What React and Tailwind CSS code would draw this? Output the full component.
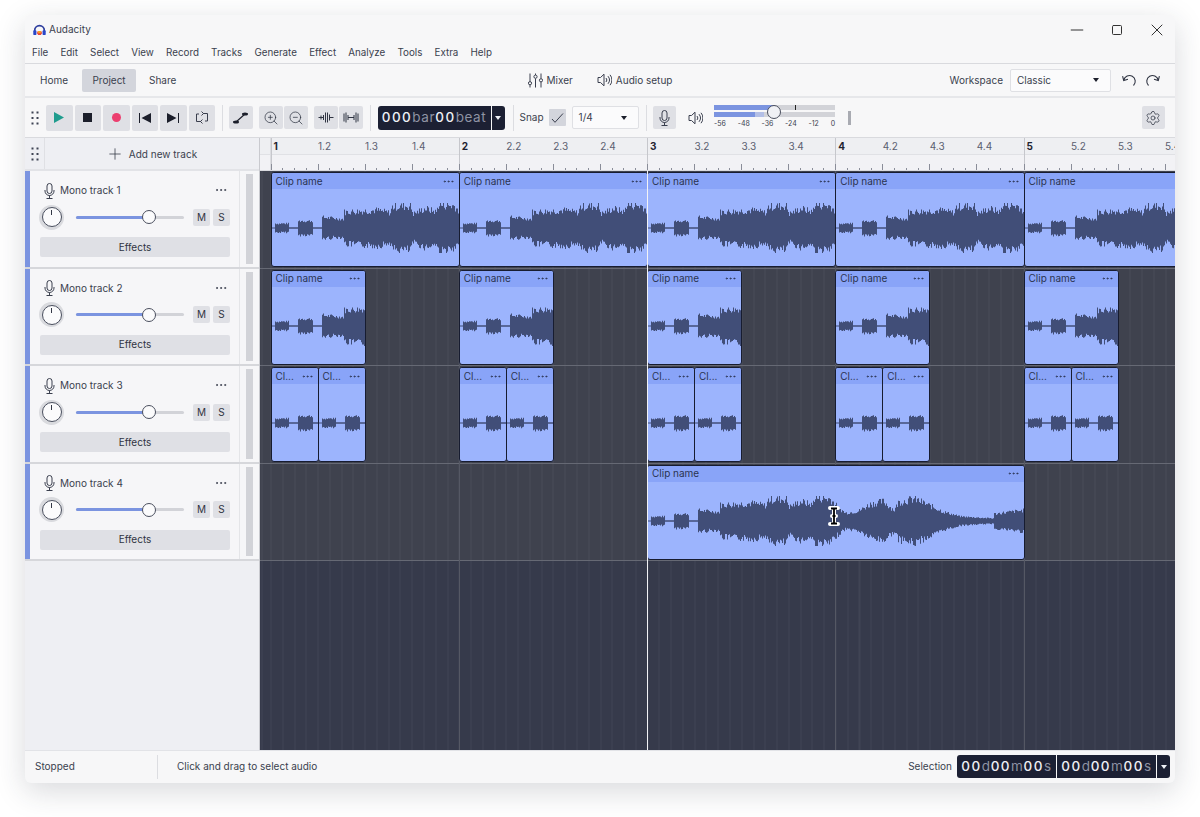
import { Ellipsis, Minus, Plus, Settings, Square, X, ZoomIn, ZoomOut } from 'lucide-react';

const FONT = "font-['Inter','Noto_Sans',sans-serif]";
const menus = ['File', 'Edit', 'Select', 'View', 'Record', 'Tracks', 'Generate', 'Effect', 'Analyze', 'Tools', 'Extra', 'Help'];
const BAR = 188.25;

// amplitude envelope of the sample, [x, half height] pairs
const envelope = [
  [0, 0.5], [2, 0.5], [3, 5], [16, 5], [17, 0.8], [25, 0.8], [26, 8], [40, 8], [41, 0.8], [49, 0.8], [50, 12],
  [71, 10], [72, 18], [105, 20], [118, 17], [120, 24], [138, 25], [141, 16], [153, 22], [164, 18], [166, 26], [182, 25],
  [190, 15], [197, 9], [210, 11], [222, 19], [235, 22], [246, 12], [250, 21], [266, 25], [284, 16], [296, 10],
  [312, 5], [335, 3.5], [345, 3], [346, 8], [360, 10], [376, 12],
];

const ampAt = (x) => {
  for (let i = 1; i < envelope.length; i++) {
    const [x0, a0] = envelope[i - 1];
    const [x1, a1] = envelope[i];
    if (x <= x1) return a0 + ((a1 - a0) * (x - x0)) / (x1 - x0);
  }
  return 0;
};

const buildWave = () => {
  let d = '';
  let seed = 7;
  const next = () => {
    seed = (seed * 9301 + 49297) % 233280;
    return seed / 233280;
  };
  for (let x = 0; x < 376; x += 1) {
    const amp = ampAt(x);
    const up = amp < 1 ? 1 : 0.7 + next() * 0.36;
    const down = amp < 1 ? 1 : 0.7 + next() * 0.36;
    d += `M${x + 0.5} ${(25 + amp * down).toFixed(1)}V${(25 - amp * up).toFixed(1)}`;
  }
  return d;
};
const wavePath = buildWave();

const Grip = () => (
  <svg width="8" height="14" viewBox="0 0 8 14" fill="#3f4454">
    {[1.5, 7, 12.5].map((y) => (
      <g key={y}>
        <rect x="0.5" y={y - 1} width="2" height="2" />
        <rect x="5.5" y={y - 1} width="2" height="2" />
      </g>
    ))}
  </svg>
);

const MicIcon = ({ className = '' }) => (
  <svg className={className} width="11" height="16" viewBox="0 0 11 16" fill="none" stroke="#3a3f4e" strokeWidth="1">
    <rect x="3" y="0.5" width="5" height="10" rx="2.5" />
    <path d="M1 7v1a4.5 4.5 0 0 0 9 0V7M5.5 12.5v2.5M2.5 15.5h6" />
  </svg>
);

const SpeakerIcon = () => (
  <svg width="15" height="14" viewBox="0 0 15 14" fill="none" stroke="#3a3f4e" strokeWidth="1">
    <path d="M1 4.5h2.5L7 1.2v11.6L3.5 9.500H1z" />
    <path d="M9 5a3 3 0 0 1 0 4M11 3.200a6 6 0 0 1 0 7.600M13 1.800a8 8 0 0 1 0 10.400" />
  </svg>
);

const MixerIcon = () => (
  <svg width="15" height="15" viewBox="0 0 15 15" fill="none" stroke="#3a3f4e" strokeWidth="1">
    <path d="M2 0.500v8M2 12v2.500M7.500 0.500v1.500M7.500 5.500v9M13 0.500v5M13 9v5.500" />
    <circle cx="2" cy="10.200" r="1.600" />
    <circle cx="7.500" cy="3.700" r="1.600" />
    <circle cx="13" cy="7.300" r="1.600" />
  </svg>
);

const Logo = () => (
  <svg width="13" height="12" viewBox="0 0 14 12" fill="none">
    <path d="M1.800 8V6.500a5.200 5.200 0 0 1 10.400 0V8" stroke="#2f3f9e" strokeWidth="1.900" />
    <rect x="0.300" y="6.200" width="3.400" height="5.300" rx="1.300" fill="#2946c8" />
    <rect x="10.300" y="6.200" width="3.400" height="5.300" rx="1.300" fill="#2946c8" />
    <path d="M4.500 7.500h5v2l-1 2h-3l-1-2z" fill="#e8413a" />
    <path d="M5.500 7h3v2.500h-3z" fill="#f7a01d" />
  </svg>
);

const UndoIcon = ({ className = '' }) => (
  <svg className={className} width="15" height="15" viewBox="0 0 15 15" fill="none" stroke="#2f3442" strokeWidth="1.100">
    <path d="M1.800 7A5.800 5.800 0 1 1 11.500 12.500M0.600 3.200L1.700 7.600L6 6.300" />
  </svg>
);

const ToolButton = ({ children, wide }) => (
  <button className={`flex items-center justify-center bg-[#dfe0e5] rounded-[2px] ${wide ? 'w-[26.5px] h-[26px]' : 'w-[23.5px] h-[23.5px]'}`}>
    {children}
  </button>
);

const Divider = () => <div className="w-px h-[26px] bg-[#dcdde1]" />;

const Caret = ({ color = '#1c1f2b' }) => (
  <svg width="6" height="4" viewBox="0 0 6 4" fill={color}><path d="M0 0h6L3 4z" /></svg>
);

const Digits = ({ parts }) => (
  <span className="flex items-baseline tracking-[1.2px]">
    {parts.map(([text, dim], i) => (
      <span key={i} className={dim ? 'text-[#8f93a3] tracking-[0.6px]' : 'text-[#eef0f5] font-medium tracking-[1.5px]'}>{text}</span>
    ))}
  </span>
);

const DropSelect = ({ label, className }) => (
  <div className={`flex items-center justify-between bg-[#fbfbfc] border border-[#dfe0e4] rounded-[2px] h-[23px] pl-[6px] pr-[11px] text-[10px] text-[#3a3f4e] ${className}`}>
    {label}
    <Caret />
  </div>
);

const Track = ({ name }) => (
  <div className="flex h-[97.5px] border-b-2 border-[#d6d7db] bg-[#f6f6f8]">
    <div className="w-[5px] bg-[#7b94e0]" />
    <div className="w-[210px] px-[10px] pt-[11px] border-r border-[#e4e5e8]">
      <div className="flex items-center h-[17px]">
        <MicIcon className="ml-[4px]" />
        <span className="ml-[5px] text-[10px] text-[#3a3f4e]">{name}</span>
        <Ellipsis size={14} strokeWidth={1.5} color="#3a3f4e" className="ml-auto mr-[1px] mt-[-1px]" />
      </div>
      <div className="flex items-center mt-[9px] h-[18px]">
        <div className="w-[25px] h-[25px] -ml-[1px] rounded-full bg-[#d9dade] flex items-center justify-center shrink-0">
          <div className="w-[20px] h-[20px] rounded-full bg-[#fbfbfc] border-[1.5px] border-[#4a4f5e] flex justify-center pt-[2px]">
            <div className="w-[1.5px] h-[5px] bg-[#333846]" />
          </div>
        </div>
        <div className="relative ml-[12px] w-[108px] h-[3px] bg-[#d2d3d8] rounded-full shrink-0">
          <div className="h-full w-[74px] bg-[#7b94e0] rounded-full" />
          <div className="absolute left-[66px] -top-[5.500px] w-[14px] h-[14px] rounded-full bg-[#fbfbfc] border border-[#4a4f5e]" />
        </div>
        <div className="ml-[9px] w-[17px] h-[17px] shrink-0 bg-[#dfe0e5] rounded-[2px] flex items-center justify-center text-[10px] text-[#2f3442]">M</div>
        <div className="ml-[3px] w-[17px] h-[17px] shrink-0 bg-[#dfe0e5] rounded-[2px] flex items-center justify-center text-[10px] text-[#2f3442]">S</div>
      </div>
      <button className="mt-[11px] w-[190px] h-[20px] bg-[#dfe0e5] rounded-[2px] text-[10px] text-[#2f3442]">Effects</button>
    </div>
    <div className="flex-1 py-[3px] flex justify-center">
      <div className="w-[7px] h-full bg-[#d2d3d8]" />
    </div>
  </div>
);

const Clip = ({ left, width, name }) => (
  <div
    className="absolute z-10 top-px h-[95px] overflow-hidden rounded-[3px] border border-[#171c30] bg-[#9cb4fd]"
    style={{ left, width }}
  >
    <div className="flex items-center justify-between h-[16px] bg-[#89a4f8] px-[4px] text-[10px] text-[#2a3350]">
      <span>{name}</span>
      <Ellipsis size={13} strokeWidth={1.5} color="#2a3350" />
    </div>
    <svg className="absolute left-0 top-[30px]" width="376" height="50" viewBox="0 0 376 50">
      <path d={wavePath} stroke="#414e78" strokeWidth="1.050" fill="none" />
    </svg>
  </div>
);

const Row = ({ children }) => (
  <div className="relative h-[97.5px] bg-[#3f424e] bg-[repeating-linear-gradient(90deg,rgba(255,255,255,0.05)_0_1px,transparent_1px_11.77px)] bg-[position:10.5px_0] border-b border-[#666974]">
    {children}
  </div>
);

const bars = [0, 1, 2, 3, 4];
const tickPositions = Array.from({ length: 78 }, (_, i) => i);

const App = () => (
  <div className={`min-h-[817px] bg-white pt-[15px] px-[25px] ${FONT}`}>
    <div className="w-[1150px] h-[768px] flex flex-col overflow-hidden rounded-[6px] bg-[#f7f7f8] shadow-[0_8px_30px_rgba(40,44,60,0.18)]">
      {/* title bar */}
      <div className="flex items-center h-[29px] pl-[8px] pr-[8px] shrink-0">
        <Logo />
        <span className="ml-[3px] text-[10px] text-[#3a3f4e]">Audacity</span>
        <div className="ml-auto flex items-center gap-[20px]">
          <Minus size={20} strokeWidth={1.2} color="#333" />
          <Square size={12} strokeWidth={2} color="#333" className="mx-[4px]" />
          <X size={20} strokeWidth={1.2} color="#333" />
        </div>
      </div>
      {/* menu */}
      <div className="flex items-center gap-[12.2px] h-[19px] pl-[7px] border-b border-[#d9dade] box-content shrink-0 text-[9.8px] text-[#3a3f4e]">
        {menus.map((m) => <span key={m}>{m}</span>)}
      </div>
      {/* tabs */}
      <div className="grid grid-cols-[1fr_auto_1fr] items-center h-[32px] border-b-2 border-[#e6e7ea] box-content shrink-0 text-[10px] text-[#3a3f4e]">
        <div className="flex items-center pl-[5px]">
          <span className="px-[10px]">Home</span>
          <span className="ml-[4px] w-[54px] h-[23px] flex items-center justify-center bg-[#d3d5dc] rounded-[2px]">Project</span>
          <span className="ml-[13px]">Share</span>
        </div>
        <div className="flex items-center">
          <MixerIcon />
          <span className="ml-[4px]">Mixer</span>
          <span className="ml-[24px]"><SpeakerIcon /></span>
          <span className="ml-[4px]">Audio setup</span>
        </div>
        <div className="flex items-center justify-end pr-[15px]">
          <span>Workspace</span>
          <DropSelect label="Classic" className="ml-[7px] w-[101px]" />
          <UndoIcon className="ml-[11px]" />
          <UndoIcon className="ml-[8px] -scale-x-100" />
        </div>
      </div>
      {/* transport toolbar */}
      <div className="flex items-center h-[39px] border-b border-[#d9dade] box-content shrink-0 pl-[6px]">
        <Grip />
        <div className="flex gap-[2px] ml-[7px]">
          <ToolButton wide>
            <svg width="10" height="11" viewBox="0 0 10 11" fill="#1f9c8e"><path d="M0 0l10 5.500L0 11z" /></svg>
          </ToolButton>
          <ToolButton wide><div className="w-[9px] h-[9px] bg-[#1c1f2b]" /></ToolButton>
          <ToolButton wide><div className="w-[9px] h-[9px] rounded-full bg-[#ec3f6f]" /></ToolButton>
          <ToolButton wide>
            <svg width="12" height="10" viewBox="0 0 12 10" fill="#1c1f2b"><path d="M0 0h1v10H0zM12 0v10L2.500 5z" /></svg>
          </ToolButton>
          <ToolButton wide>
            <svg width="12" height="10" viewBox="0 0 12 10" fill="#1c1f2b"><path d="M11 0h1v10h-1zM0 0v10l9.500-5z" /></svg>
          </ToolButton>
          <ToolButton wide>
            <svg width="12" height="13" viewBox="0 0 12 13" fill="none" stroke="#3a3f4e" strokeWidth="1">
              <path d="M7 2.500h4.500v7.500H9M5 10.500H0.500V3H3M5.500 0.500L7.500 2.500L5.500 4.500M6.500 8.500L4.500 10.500L6.500 12.500" />
            </svg>
          </ToolButton>
        </div>
        <div className="ml-[7px]"><Divider /></div>
        <div className="ml-[6px]">
          <ToolButton>
            <svg width="15" height="12" viewBox="0 0 15 12" fill="#1c1f2b">
              <path d="M3 10L12 2" stroke="#1c1f2b" strokeWidth="1.100" />
              <ellipse cx="3" cy="10" rx="3" ry="1.500" />
              <ellipse cx="12" cy="2" rx="3" ry="1.500" />
            </svg>
          </ToolButton>
        </div>
        <div className="flex gap-[1.500px] ml-[6.500px]">
          <ToolButton><ZoomIn size={16} strokeWidth={1.1} color="#2f3442" /></ToolButton>
          <ToolButton><ZoomOut size={16} strokeWidth={1.1} color="#2f3442" /></ToolButton>
        </div>
        <div className="flex gap-[1.500px] ml-[6.500px]">
          <ToolButton>
            <svg width="16" height="11" viewBox="0 0 16 11" fill="none" stroke="#2f3442" strokeWidth="1">
              <path d="M0.500 5.500H5M11 5.500h4.500M5.500 3v5M7.500 0.500v10M9.500 0.500v10M11.500 2.500v6" />
              <path d="M3 3.500v4" />
            </svg>
          </ToolButton>
          <ToolButton>
            <svg width="16" height="11" viewBox="0 0 16 11" fill="none" stroke="#2f3442" strokeWidth="1">
              <path d="M1 1.500v8M3 0.500v10M5 3v5M5 5.500h6M11 3v5M13 0.500v10M15 1.500v8" />
            </svg>
          </ToolButton>
        </div>
        <div className="ml-[7px]"><Divider /></div>
        <div className="flex ml-[7px] h-[24px] rounded-[3px] overflow-hidden text-[13.500px]">
          <div className="w-[113px] bg-[#1c2033] flex items-center justify-center"><Digits parts={[['000'], ['bar', 1], ['00'], ['beat', 1]]} /></div>
          <div className="ml-px w-[13px] bg-[#1c2033] flex items-center justify-center"><Caret color="#eef0f5" /></div>
        </div>
        <div className="ml-[8px]"><Divider /></div>
        <span className="ml-[6px] text-[10px] text-[#3a3f4e]">Snap</span>
        <div className="ml-[5px] w-[17px] h-[17px] bg-[#d3d5dc] rounded-[1px] flex items-center justify-center">
          <svg width="13" height="10" viewBox="0 0 13 10" fill="none" stroke="#3a3f4e" strokeWidth="1"><path d="M1 6l3 3.300L12 0.500" /></svg>
        </div>
        <DropSelect label="1/4" className="ml-[6px] w-[67px]" />
        <div className="ml-[7px]"><Divider /></div>
        <div className="ml-[6px]"><ToolButton><MicIcon /></ToolButton></div>
        <div className="ml-[12px]"><SpeakerIcon /></div>
        {/* level meter */}
        <div className="relative ml-[11px] w-[121px] h-[26px] text-[7px] text-[#3a3f4e]">
          <div className="relative h-[5px] bg-[#d2d3d8]">
            <div className="h-full w-[60px] bg-[#7b94e0]" />
            <div className="absolute left-[81px] top-0 w-px h-full bg-[#222]" />
          </div>
          <div className="flex h-[5px] mt-[2px] bg-[#d2d3d8]">
            <div className="h-full w-[41px] bg-[#7b94e0]" />
            <div className="h-full w-[9px] bg-[#b3bfe6]" />
          </div>
          <div className="flex justify-between mt-[2px] leading-[9px]">
            {['-56', '-48', '-36', '-24', '-12', '0'].map((l) => <span key={l}>{l}</span>)}
          </div>
          <div className="absolute left-[53px] top-0 w-[14px] h-[14px] rounded-full bg-[#f0f1f5] border border-[#4a4f5e]" />
        </div>
        <div className="ml-[13px] w-[3px] h-[14px] bg-[#a9abb2]" />
        <div className="ml-auto mr-[10px]"><ToolButton><Settings size={16} strokeWidth={1.1} color="#2f3442" /></ToolButton></div>
      </div>
      {/* main area */}
      <div className="flex-1 min-h-0 flex">
        {/* track panel */}
        <div className="w-[235px] shrink-0 flex flex-col bg-[#eeeff3] border-r border-[#c9cacf]">
          <div className="flex h-[33px] shrink-0 border-b-2 border-[#e2e3e7]">
            <div className="w-[20px] flex items-center justify-center border-r border-[#dfe0e4]"><Grip /></div>
            <div className="flex-1 flex items-center justify-center pt-[1px] pr-[1px] text-[10px] text-[#3a3f4e]">
              <Plus size={18} strokeWidth={1} color="#2f3442" />
              <span className="ml-[5px]">Add new track</span>
            </div>
          </div>
          {['Mono track 1', 'Mono track 2', 'Mono track 3', 'Mono track 4'].map((n) => <Track key={n} name={n} />)}
        </div>
        {/* timeline */}
        <div className="flex-1 min-w-0 flex flex-col overflow-hidden relative">
          {/* ruler */}
          <div className="relative h-[33px] shrink-0 bg-[#f2f2f5] border-b border-[#d9dade] text-[10px] text-[#5b6070]">
            <div className="h-[17px] border-b border-[#e0e1e5] bg-[#eeeff2]" />
            <div className="absolute left-[10px] top-0 w-px h-full bg-[#dcdde1]" />
            {bars.map((b) => (
              <div key={b}>
                <div className="absolute top-0 w-px h-full bg-[#c6c7cc]" style={{ left: 10.5 + b * BAR }} />
                <span className="absolute top-[1px] font-bold text-[#1f2330]" style={{ left: 13.5 + b * BAR }}>{b + 1}</span>
                {[2, 3, 4].map((q) => (
                  <span key={q} className="absolute top-[1px] whitespace-nowrap" style={{ left: 11 + b * BAR + (q - 1) * 47 }}>
                    {`${b + 1}.${q}`}
                  </span>
                ))}
              </div>
            ))}
            {tickPositions.map((i) => (
              <div
                key={i}
                className={`absolute bottom-0 w-px ${i % 4 === 0 ? 'h-[6px] bg-[#8a8d98]' : 'h-[2px] bg-[#8a8d98]'}`}
                style={{ left: 10.5 + i * (BAR / 16) }}
              />
            ))}
          </div>
          {/* tracks canvas */}
          <div className="relative flex-1 min-h-0 bg-[#363a4b] bg-[repeating-linear-gradient(90deg,rgba(255,255,255,0.05)_0_1px,transparent_1px_11.77px)] bg-[position:10.5px_0]">
            <Row>
              {bars.map((b) => <Clip key={b} left={10.5 + b * BAR} width={BAR + 1} name="Clip name" />)}
            </Row>
            <Row>
              {bars.map((b) => <Clip key={b} left={10.5 + b * BAR} width={BAR / 2 + 1} name="Clip name" />)}
            </Row>
            <Row>
              {bars.flatMap((b) => [
                <Clip key={`${b}a`} left={10.5 + b * BAR} width={BAR / 4 + 1} name="Cl..." />,
                <Clip key={`${b}b`} left={10.5 + b * BAR + BAR / 4} width={BAR / 4 + 1} name="Cl..." />,
              ])}
            </Row>
            <Row>
              <Clip left={10.5 + 2 * BAR} width={BAR * 2 + 1} name="Clip name" />
            </Row>
            {/* bar lines and playhead */}
            {bars.slice(1).map((b) => (
              <div key={b} className="absolute top-0 bottom-0 w-px bg-[#555864]" style={{ left: 10.5 + b * BAR }} />
            ))}
            <div className="absolute z-20 top-0 bottom-0 left-[386.500px] w-px bg-[#f2f2f5]" />
            {/* text cursor */}
            <svg className="absolute z-20 left-[568px] top-[335px]" width="12" height="20" viewBox="0 0 12 20" fill="none">
              <path d="M2 2h8M6 2v16M2 18h8M4 10h4" stroke="#fff" strokeWidth="4" strokeLinecap="round" />
              <path d="M3 2.500h6M6 2.500v15M3 17.500h6M4.500 10h3" stroke="#000" strokeWidth="1.800" />
            </svg>
          </div>
        </div>
      </div>
      {/* status bar */}
      <div className="flex items-center h-[33px] shrink-0 pb-[1px] border-t border-[#e2e3e7] text-[10px] text-[#3a3f4e]">
        <span className="ml-[10px] w-[122px]">Stopped</span>
        <div className="w-px h-[24px] bg-[#dcdde1]" />
        <span className="ml-[19px]">Click and drag to select audio</span>
        <span className="ml-auto">Selection</span>
        <div className="ml-[5px] mr-[5px] flex h-[23px] rounded-[3px] overflow-hidden text-[13.500px] gap-px">
          <div className="w-[99px] bg-[#1c2033] flex items-center justify-center"><Digits parts={[['00'], ['d', 1], ['00'], ['m', 1], ['00'], ['s', 1]]} /></div>
          <div className="w-[99px] bg-[#1c2033] flex items-center justify-center"><Digits parts={[['00'], ['d', 1], ['00'], ['m', 1], ['00'], ['s', 1]]} /></div>
          <div className="w-[13px] bg-[#1c2033] flex items-center justify-center"><Caret color="#eef0f5" /></div>
        </div>
      </div>
    </div>
  </div>
);

export default App;
